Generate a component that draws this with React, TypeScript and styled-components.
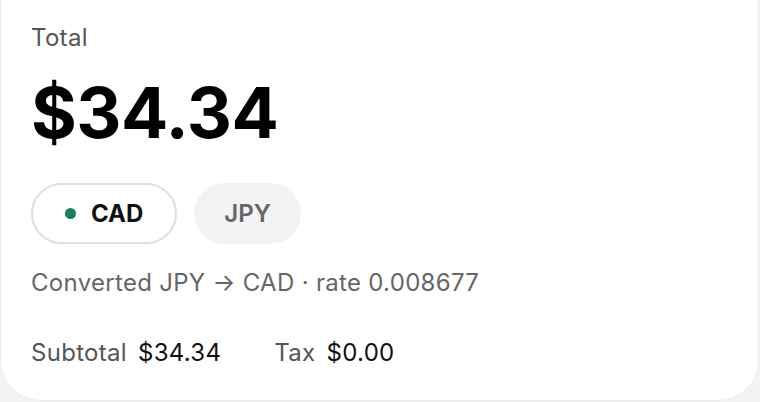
import React, { useState } from 'react';
import styled, { createGlobalStyle } from 'styled-components';

const GlobalStyle = createGlobalStyle`
  html, body {
    margin: 0;
    padding: 0;
    background: #f4f4f2;
  }
  body {
    font-family: Inter, "Noto Sans", "Liberation Sans", sans-serif;
    -webkit-font-smoothing: antialiased;
  }
`;

const Card = styled.section`
  box-sizing: border-box;
  width: 759px;
  height: 401px;
  padding: 24px 30px 0;
  background: #fff;
  border: 1px solid #ececea;
  border-top: none;
  border-radius: 0 0 40px 40px;
  display: flex;
  flex-direction: column;
`;

const Label = styled.div`
  font-size: 24px;
  line-height: 28px;
  letter-spacing: 0.3px;
  color: #555;
`;

const Amount = styled.div`
  margin-top: 24px;
  font-size: 70px;
  line-height: 74px;
  font-weight: 700;
  color: #000;
  letter-spacing: -0.5px;
`;

const ChipRow = styled.div`
  display: flex;
  gap: 17px;
  margin-top: 33px;
`;

const Chip = styled.button<{ $active: boolean }>`
  box-sizing: border-box;
  height: 61px;
  padding: 0 ${({ $active }) => ($active ? '32px' : '28px')};
  display: flex;
  align-items: center;
  gap: 15px;
  border-radius: 31px;
  border: 2px solid ${({ $active }) => ($active ? '#dedede' : 'transparent')};
  background: ${({ $active }) => ($active ? '#fff' : '#f3f3f3')};
  color: ${({ $active }) => ($active ? '#111' : '#666')};
  font-family: inherit;
  font-size: 24px;
  font-weight: ${({ $active }) => ($active ? 700 : 600)};
  cursor: pointer;
`;

const Dot = styled.span`
  width: 11px;
  height: 11px;
  border-radius: 50%;
  background: #1b7f58;
`;

const Note = styled.div`
  margin-top: 25px;
  font-size: 24px;
  line-height: 28px;
  letter-spacing: 0.3px;
  color: #666;
`;

const Totals = styled.div`
  display: flex;
  gap: 53px;
  margin-top: 42px;
`;

const TotalItem = styled.div`
  display: flex;
  gap: 11px;
  font-size: 24px;
  line-height: 28px;
  letter-spacing: 0.3px;
`;

const ItemLabel = styled.span`
  color: #555;
`;

const ItemValue = styled.span`
  color: #111;
`;

const currencies = ['CAD', 'JPY'];

export default function App() {
  const [active, setActive] = useState('CAD');

  return (
    <>
      <GlobalStyle />
      <Card>
        <Label>Total</Label>
        <Amount>$34.34</Amount>
        <ChipRow>
          {currencies.map((c) => (
            <Chip key={c} $active={active === c} onClick={() => setActive(c)}>
              {active === c && <Dot />}
              {c}
            </Chip>
          ))}
        </ChipRow>
        <Note>Converted JPY → CAD · rate 0.008677</Note>
        <Totals>
          <TotalItem>
            <ItemLabel>Subtotal</ItemLabel>
            <ItemValue>$34.34</ItemValue>
          </TotalItem>
          <TotalItem>
            <ItemLabel>Tax</ItemLabel>
            <ItemValue>$0.00</ItemValue>
          </TotalItem>
        </Totals>
      </Card>
    </>
  );
}
